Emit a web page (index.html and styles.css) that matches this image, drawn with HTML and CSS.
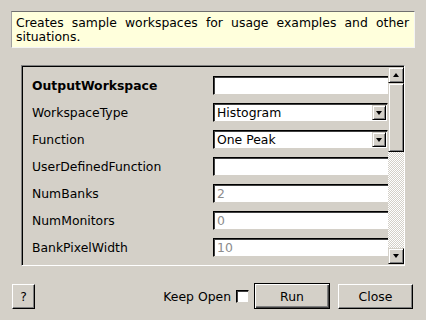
FILE: index.html
```html
<!DOCTYPE html>
<html lang="en">
<head>
  <meta charset="UTF-8">
  <title>CreateSampleWorkspace</title>
  <link rel="stylesheet" href="styles.css">
</head>
<body>
  <div class="dialog">
    <div class="description">Creates sample workspaces for usage examples and other situations.</div>

    <div class="frame">
      <div class="props">
        <div class="row">
          <span class="label bold">OutputWorkspace</span>
          <input class="field" type="text" value="">
        </div>
        <div class="row">
          <span class="label">WorkspaceType</span>
          <div class="combo"><span>Histogram</span><span class="drop"><i class="tri"></i></span></div>
        </div>
        <div class="row">
          <span class="label">Function</span>
          <div class="combo"><span>One Peak</span><span class="drop"><i class="tri"></i></span></div>
        </div>
        <div class="row">
          <span class="label">UserDefinedFunction</span>
          <input class="field" type="text" value="">
        </div>
        <div class="row">
          <span class="label">NumBanks</span>
          <input class="field disabled" type="text" value="2" disabled>
        </div>
        <div class="row">
          <span class="label">NumMonitors</span>
          <input class="field disabled" type="text" value="0" disabled>
        </div>
        <div class="row">
          <span class="label">BankPixelWidth</span>
          <input class="field disabled" type="text" value="10" disabled>
        </div>
      </div>

      <div class="scrollbar">
        <span class="sb-btn"><i class="tri up"></i></span>
        <span class="sb-thumb"></span>
        <span class="sb-trough"></span>
        <span class="sb-btn"><i class="tri"></i></span>
      </div>
    </div>

    <div class="buttons">
      <button class="btn help">?</button>
      <span class="spacer"></span>
      <span class="keep">Keep Open</span>
      <span class="check"></span>
      <button class="btn run">Run</button>
      <button class="btn close">Close</button>
    </div>
  </div>
</body>
</html>
```

FILE: styles.css
```css
:root {
  --face: #d4d0c8;
  --light: #ffffff;
  --shadow: #808080;
  --dark: #404040;
}

* {
  box-sizing: border-box;
  margin: 0;
  padding: 0;
}

body {
  width: 426px;
  height: 320px;
  overflow: hidden;
  background: var(--face);
  font-family: 'DejaVu Sans', sans-serif;
  font-size: 12.4px;
  color: #000;
}

.dialog {
  padding-top: 11px;
}

.description {
  margin: 0 11px;
  height: 37px;
  padding: 4px 5px 0 4px;
  line-height: 14px;
  background: #ffffdc;
  border: 1px solid;
  border-color: #6f6f6f #f4f4f4 #f4f4f4 #a0a0a0;
  text-align: justify;
}

.frame {
  display: flex;
  margin: 17px 0 0 21px;
  width: 384px;
  height: 201px;
  border: 1px solid;
  border-color: var(--shadow) var(--light) var(--light) var(--shadow);
  box-shadow: inset 1px 1px #000;
  padding: 1px 0 0 1px;
}

.props {
  flex: 1;
  overflow: hidden;
  padding-top: 9px;
}

.row {
  display: flex;
  align-items: center;
  height: 19px;
  margin-bottom: 8px;
}

.label {
  flex: none;
  width: 190px;
  padding-left: 9px;
}

.bold {
  font-weight: bold;
}

.field {
  flex: none;
  width: 190px;
  height: 19px;
  padding: 0 3px;
  font: inherit;
  color: #000;
  background: #fff;
  border: 1px solid;
  border-color: #000 var(--face) var(--face) #000;
  box-shadow: inset 1px 1px #404040;
  outline: none;
}

.field.disabled {
  color: #8c8c8c;
}

.combo {
  flex: none;
  display: flex;
  align-items: center;
  justify-content: space-between;
  width: 175px;
  height: 19px;
  padding: 0 1px 0 3px;
  background: #fff;
  border: 1px solid;
  border-color: #000 var(--face) var(--face) #000;
  box-shadow: inset 1px 1px #404040;
}

.drop {
  display: flex;
  align-items: center;
  justify-content: center;
  width: 14px;
  height: 15px;
  background: var(--face);
  border: 1px solid;
  border-color: var(--face) #000 #000 var(--face);
  box-shadow: inset 1px 1px var(--light), inset -1px -1px var(--shadow);
}

.tri {
  display: block;
  width: 0;
  height: 0;
  border-left: 3.5px solid transparent;
  border-right: 3.5px solid transparent;
  border-top: 4px solid #000;
}

.tri.up {
  border-top: none;
  border-bottom: 4px solid #000;
}

.scrollbar {
  flex: none;
  display: flex;
  flex-direction: column;
  width: 16px;
  height: 197px;
}

.sb-btn {
  display: flex;
  align-items: center;
  justify-content: center;
  height: 16px;
  background: var(--face);
  border: 1px solid;
  border-color: var(--face) #000 #000 var(--face);
  box-shadow: inset 1px 1px var(--light), inset -1px -1px var(--shadow);
}

.sb-thumb {
  height: 69px;
  background: var(--face);
  border: 1px solid;
  border-color: var(--face) #000 #000 var(--face);
  box-shadow: inset 1px 1px var(--light), inset -1px -1px var(--shadow);
}

.sb-trough {
  flex: 1;
  background: repeating-conic-gradient(var(--face) 0 25%, #fff 0 50%) 0 0 / 2px 2px;
}

.buttons {
  display: flex;
  align-items: center;
  margin-top: 17px;
  padding: 0 13px 0 12px;
}

.spacer {
  flex: 1;
}

.btn {
  font: inherit;
  color: #000;
  background: var(--face);
  border: 1px solid;
  border-color: var(--light) #000 #000 var(--light);
  box-shadow: inset -1px -1px var(--shadow);
}

.help {
  width: 23px;
  height: 25px;
}

.keep {
  margin-right: 5px;
}

.check {
  width: 13px;
  height: 13px;
  background: #fff;
  border: 1px solid;
  border-color: #000 var(--face) var(--face) #000;
  box-shadow: inset 1px 1px #404040;
}

.run {
  width: 76px;
  height: 26px;
  margin-left: 5px;
  border-color: #000;
  box-shadow: inset 1px 1px var(--light), inset -1px -1px #404040, inset -2px -2px var(--shadow);
}

.close {
  width: 75px;
  height: 25px;
  margin-left: 8px;
}
```
